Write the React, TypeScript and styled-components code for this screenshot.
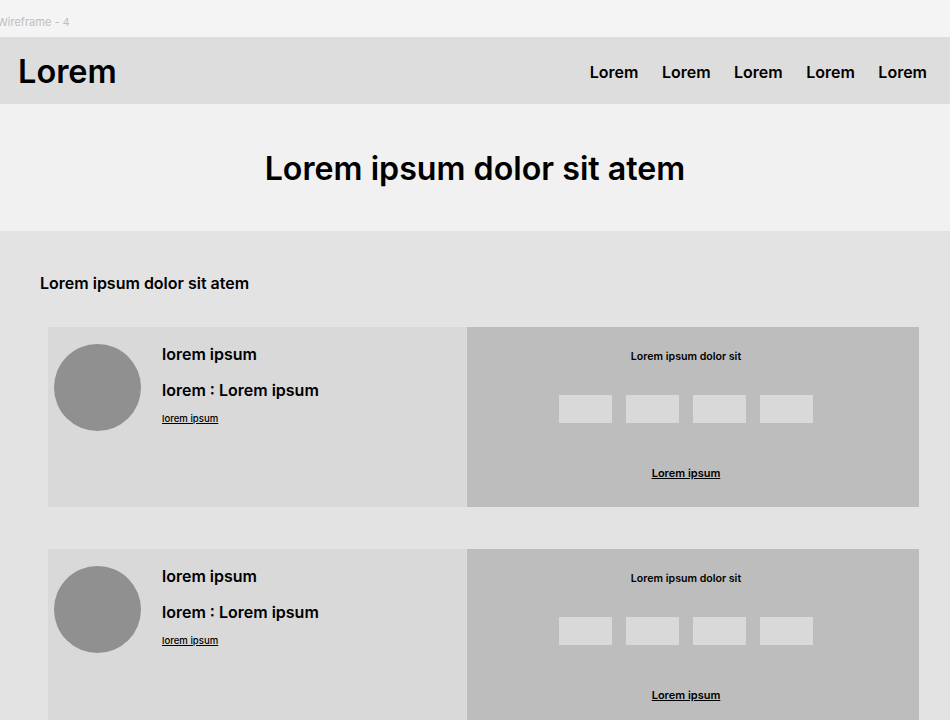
import React, { FC } from "react";
import styled, { createGlobalStyle } from "styled-components";

const GlobalStyle = createGlobalStyle`
  html, body {
    margin: 0;
    padding: 0;
    background: #e3e3e3;
    font-family: Inter, "Noto Sans", "Liberation Sans", sans-serif;
    color: #000;
  }
`;

const Page = styled("div")`
  width: 950px;
  min-height: 720px;
  overflow: hidden;
  background: #e3e3e3;
`;

const FrameLabel = styled("div")`
  height: 37px;
  background: #f4f4f4;
  color: #bdbdbd;
  font-size: 11px;
  line-height: 1;
  padding: 17px 0 0 0;
  margin-left: -3px;
  box-sizing: border-box;
`;

const Header = styled("header")`
  height: 67px;
  background: #dddddd;
  display: flex;
  align-items: center;
  justify-content: space-between;
  padding: 0 23px 0 18px;
  box-sizing: border-box;
`;

const Logo = styled("div")`
  font-size: 32.5px;
  font-weight: 600;
  padding-top: 1px;
`;

const Nav = styled("nav")`
  display: flex;
  gap: 23.5px;
  padding-top: 3px;
`;

const NavItem = styled("span")`
  font-size: 16px;
  font-weight: 600;
`;

const Hero = styled("section")`
  height: 127px;
  background: #f1f1f1;
  display: flex;
  align-items: center;
  justify-content: center;
`;

const HeroTitle = styled("h1")`
  margin: 0;
  font-size: 32.2px;
  font-weight: 600;
  padding-top: 1px;
`;

const Main = styled("main")`
  padding: 42px 31px 0 40px;
`;

const SectionTitle = styled("h2")`
  margin: 0 0 34px 0;
  font-size: 16px;
  font-weight: 600;
`;

const CardList = styled("div")`
  display: flex;
  flex-direction: column;
  gap: 42px;
  padding-left: 8px;
`;

const Card = styled("div")`
  display: flex;
  height: 180px;
`;

const Profile = styled("div")`
  width: 419px;
  background: #d9d9d9;
  display: flex;
  gap: 21px;
  padding: 17px 0 0 6px;
  box-sizing: border-box;
`;

const Avatar = styled("div")`
  width: 87px;
  height: 87px;
  border-radius: 50%;
  background: #909090;
  flex-shrink: 0;
`;

const Info = styled("div")`
  display: flex;
  flex-direction: column;
  align-items: flex-start;
`;

const Name = styled("div")`
  font-size: 16px;
  font-weight: 600;
  line-height: 20px;
`;

const Detail = styled("div")`
  font-size: 16px;
  font-weight: 600;
  line-height: 20px;
  margin-top: 16px;
`;

const SmallLink = styled("a")`
  font-size: 9.6px;
  font-weight: 500;
  color: #000;
  text-decoration: underline;
  margin-top: 13px;
  line-height: 12px;
`;

const Panel = styled("div")`
  flex: 1;
  background: #bdbdbd;
  display: flex;
  flex-direction: column;
  align-items: center;
  padding: 23px 14px 0 0;
  box-sizing: border-box;
`;

const PanelTitle = styled("div")`
  font-size: 10.6px;
  font-weight: 600;
  line-height: 14px;
`;

const Slots = styled("div")`
  display: flex;
  gap: 14px;
  margin-top: 31px;
`;

const Slot = styled("div")`
  width: 53px;
  height: 28px;
  background: #d9d9d9;
`;

const PanelLink = styled("a")`
  font-size: 11px;
  font-weight: 600;
  color: #000;
  text-decoration: underline;
  margin-top: 43px;
  line-height: 14px;
`;

const ProfileCard: FC = () => (
  <Card>
    <Profile>
      <Avatar />
      <Info>
        <Name>lorem ipsum</Name>
        <Detail>lorem : Lorem ipsum</Detail>
        <SmallLink>lorem ipsum</SmallLink>
      </Info>
    </Profile>
    <Panel>
      <PanelTitle>Lorem ipsum dolor sit</PanelTitle>
      <Slots>
        {[0, 1, 2, 3].map((i) => (
          <Slot key={i} />
        ))}
      </Slots>
      <PanelLink>Lorem ipsum</PanelLink>
    </Panel>
  </Card>
);

const App: FC = () => (
  <>
    <GlobalStyle />
    <Page>
      <FrameLabel>Wireframe - 4</FrameLabel>
      <Header>
        <Logo>Lorem</Logo>
        <Nav>
          {["Lorem", "Lorem", "Lorem", "Lorem", "Lorem"].map((label, i) => (
            <NavItem key={i}>{label}</NavItem>
          ))}
        </Nav>
      </Header>
      <Hero>
        <HeroTitle>Lorem ipsum dolor sit atem</HeroTitle>
      </Hero>
      <Main>
        <SectionTitle>Lorem ipsum dolor sit atem</SectionTitle>
        <CardList>
          <ProfileCard />
          <ProfileCard />
        </CardList>
      </Main>
    </Page>
  </>
);

export default App;
